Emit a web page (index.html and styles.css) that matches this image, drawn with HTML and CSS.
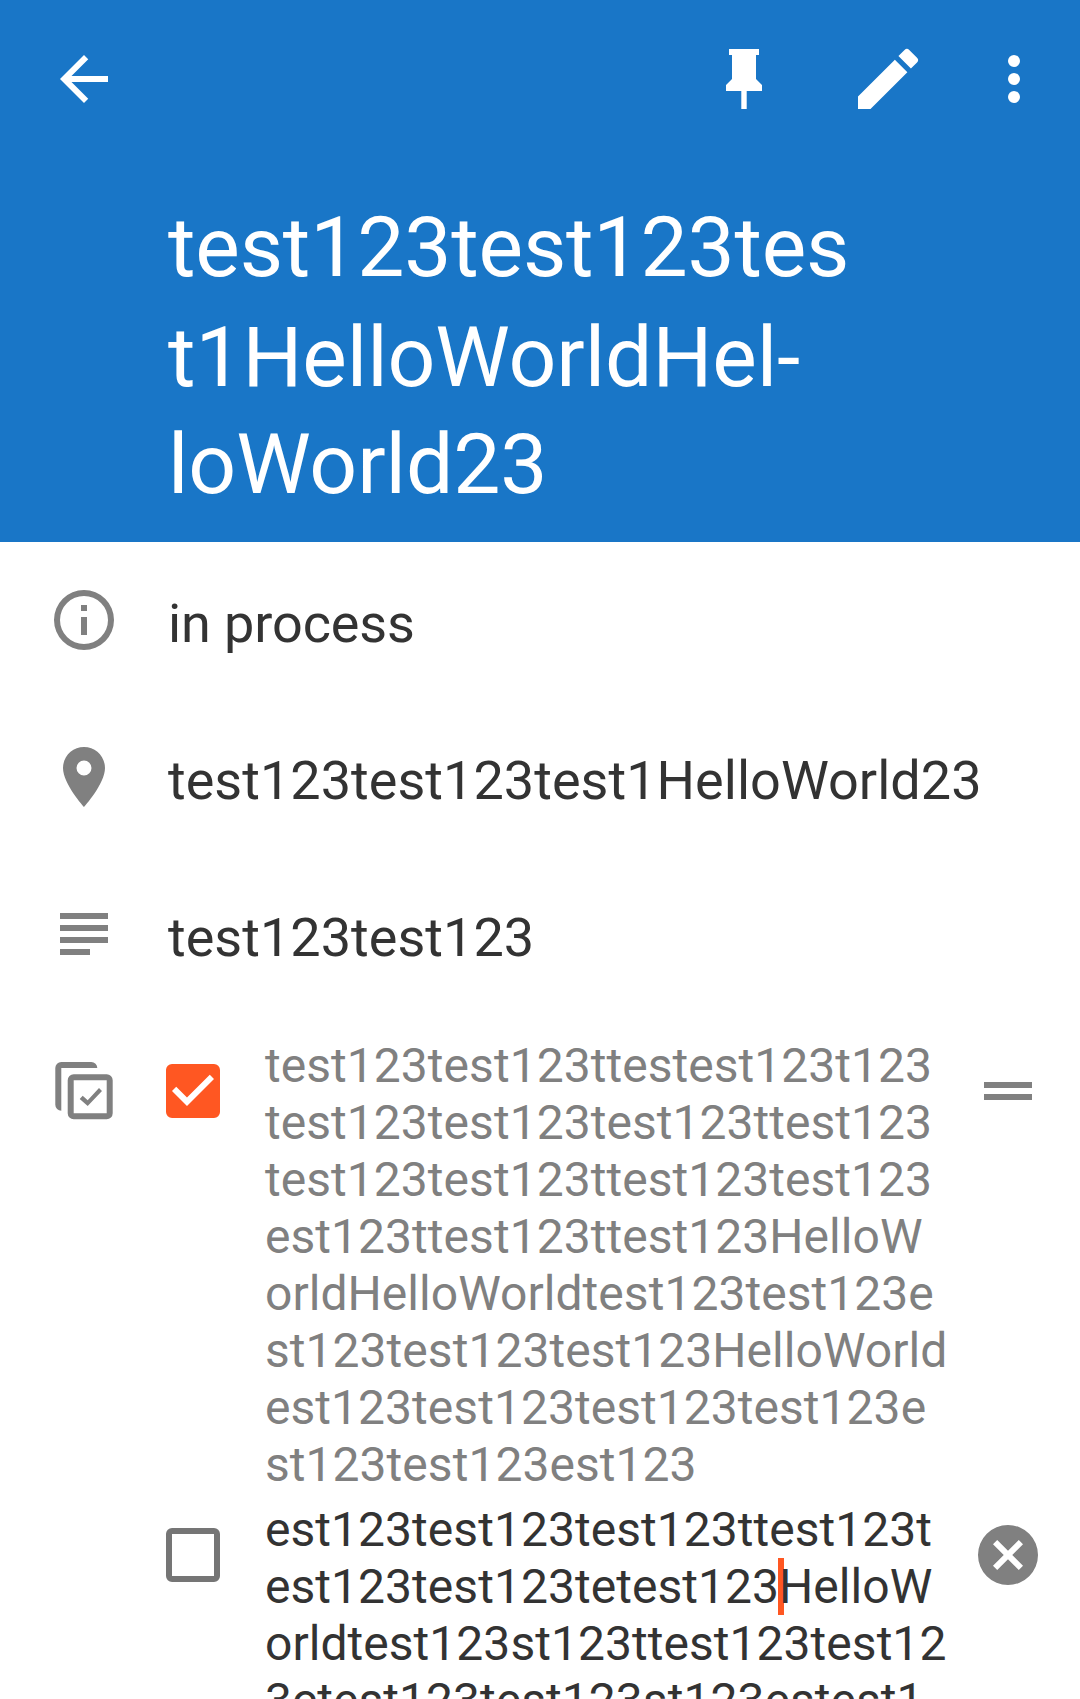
FILE: index.html
```html
<!DOCTYPE html>
<html lang="en">
<head>
<meta charset="utf-8">
<title>Task details</title>
<link rel="stylesheet" href="styles.css">
</head>
<body>
<header class="header">
  <div class="toolbar">
    <svg class="icon back" viewBox="0 0 24 24"><path d="M20 11H7.83l5.59-5.59L12 4l-8 8 8 8 1.41-1.41L7.83 13H20v-2z"/></svg>
    <svg class="icon pin" viewBox="0 0 24 24"><path d="M16 12V4h1V2H7v2h1v8l-2 2v2h5.1v6h1.8v-6H18v-2l-2-2z"/></svg>
    <svg class="icon edit" viewBox="1.200 1.200 21.600 21.600"><path d="M3 17.25V21h3.75L17.81 9.94l-3.75-3.75L3 17.25zM20.71 7.04a1 1 0 0 0 0-1.41l-2.34-2.34a1 1 0 0 0-1.41 0l-1.83 1.83 3.75 3.75 1.83-1.83z"/></svg>
    <svg class="icon more" viewBox="0 0 24 24"><circle cx="12" cy="6" r="2"/><circle cx="12" cy="12" r="2"/><circle cx="12" cy="18" r="2"/></svg>
  </div>
  <h1 class="title"><span class="line first">test123test123tes</span><span class="line">t1HelloWorldHel-</span><span class="line last">loWorld23</span></h1>
</header>
<main class="details">
  <div class="row">
    <svg class="icon" viewBox="0 0 24 24"><path d="M11 17h2v-6h-2v6zm1-15a10 10 0 1 0 0 20 10 10 0 0 0 0-20zm0 18a8 8 0 1 1 0-16 8 8 0 0 1 0 16zM11 9h2V7h-2v2z"/></svg>
    <span class="value">in process</span>
  </div>
  <div class="row">
    <svg class="icon" viewBox="0 0 24 24"><path d="M12 2C8.13 2 5 5.13 5 9c0 5.25 7 13 7 13s7-7.75 7-13c0-3.87-3.13-7-7-7zm0 9.5a2.5 2.5 0 0 1 0-5 2.5 2.5 0 0 1 0 5z"/></svg>
    <span class="value">test123test123test1HelloWorld23</span>
  </div>
  <div class="row">
    <svg class="icon" viewBox="0 0 24 24"><path d="M4 5h16v2H4zM4 9h16v2H4zM4 13h16v2H4zM4 17h10v2H4z"/></svg>
    <span class="value">test123test123</span>
  </div>
  <div class="checklist">
    <svg class="icon list-icon" viewBox="0 0 72 72"><rect class="outline" x="22.700" y="22.300" width="39" height="39" rx="3"/><path d="M13.300 55.700a6 6 0 0 1-6-6V13a6 6 0 0 1 6-6h30a6 6 0 0 1 6 6h-36zM31.700 44l3-3.200 5 4.400L51 33l3 3.100L39.700 51z"/></svg>
    <div class="items">
      <div class="item done">
        <svg class="icon check checked" viewBox="0 0 24 24"><path d="M19 3H5a2 2 0 0 0-2 2v14a2 2 0 0 0 2 2h14a2 2 0 0 0 2-2V5a2 2 0 0 0-2-2zm-9 14l-5-5 1.410-1.410L10 14.170l7.590-7.590L19 8l-9 9z"/></svg>
        <p class="text">test123test123ttestest123t123<br>test123test123test123ttest123<br>test123test123ttest123test123<br>est123ttest123ttest123HelloW<br>orldHelloWorldtest123test123e<br>st123test123test123HelloWorld<br>est123test123test123test123e<br>st123test123est123</p>
        <svg class="icon action" viewBox="0 0 24 24"><path d="M4 9h16v2H4zM4 13h16v2H4z"/></svg>
      </div>
      <div class="item">
        <svg class="icon check" viewBox="0 0 24 24"><path d="M19 5v14H5V5h14m0-2H5a2 2 0 0 0-2 2v14a2 2 0 0 0 2 2h14a2 2 0 0 0 2-2V5a2 2 0 0 0-2-2z"/></svg>
        <p class="text">est123test123test123ttest123t<br>est123test123tetest123<span class="caret"></span>HelloW<br>orldtest123st123ttest123test12<br>3ctest123test123st123estest1</p>
        <svg class="icon action" viewBox="0 0 24 24"><path d="M12 2a10 10 0 1 0 0 20 10 10 0 0 0 0-20zm5 13.590L15.590 17 12 13.410 8.410 17 7 15.590 10.590 12 7 8.410 8.410 7 12 10.590 15.590 7 17 8.410 13.410 12 17 15.590z"/></svg>
      </div>
    </div>
  </div>
</main>
</body>
</html>
```
FILE: styles.css
```css
* { box-sizing: border-box; }
html { overflow: hidden; }
body {
  margin: 0;
  height: 1699px;
  overflow: hidden;
  background: #fff;
  color: #333;
  font-family: Roboto, sans-serif;
}
.icon { display: block; flex: none; width: 72px; height: 72px; fill: #808080; }
.header { height: 542px; background: #1976c7; color: #fff; }
.toolbar { display: flex; align-items: center; height: 158px; padding: 0 30px 0 48px; }
.toolbar .icon { fill: #fff; }
.pin { margin-left: auto; }
.edit { margin-left: 72px; }
.more { margin-left: 54px; }
.title { margin: 36px 0 0 168px; font-size: 84px; font-weight: 400; white-space: nowrap; }
.line { display: block; height: 107px; line-height: 108px; letter-spacing: -0.08px; }
.first { height: 110px; letter-spacing: -0.18px; }
.row { display: flex; align-items: center; height: 157px; padding-left: 48px; }
.row:first-child { height: 156px; }
.value { margin: 9px 0 0 48px; font-size: 54px; line-height: 64px; letter-spacing: 0.03px; white-space: nowrap; }
.row:first-child .value { margin-top: 7px; letter-spacing: -0.1px; }
.checklist { display: flex; padding: 25px 36px 0 48px; }
.list-icon { margin-top: 18px; }
.outline { fill: none; stroke: #808080; stroke-width: 6; }
.items { flex: 1; margin-left: 37px; }
.item { display: flex; margin-bottom: 8px; }
.item .check { margin-top: 18px; fill: #757575; }
.item .checked { fill: #ff5722; }
.text { flex: 1; margin: 0 0 0 36px; font-size: 48px; line-height: 57px; letter-spacing: 0.04px; white-space: nowrap; }
.done .text { color: #808080; }
.action { margin-top: 18px; }
.caret { display: inline-block; width: 6px; height: 57px; margin: 0 -5px 0 -1px; vertical-align: top; background: #ff5722; }
```
